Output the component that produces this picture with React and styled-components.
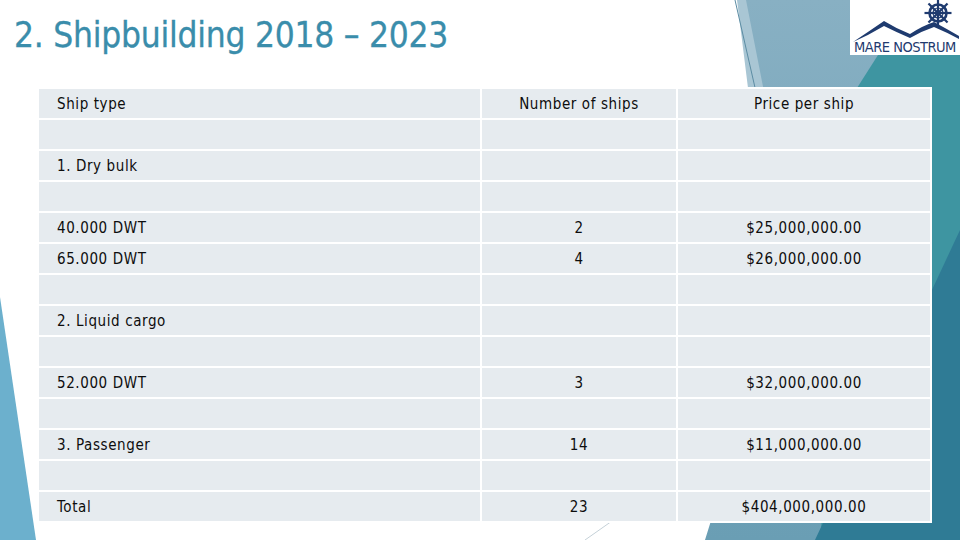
import React from 'react';
import styled, { createGlobalStyle } from 'styled-components';

const rows = [
  ['Ship type', 'Number of ships', 'Price per ship'],
  ['', '', ''],
  ['1. Dry bulk', '', ''],
  ['', '', ''],
  ['40.000 DWT', '2', '$25,000,000.00'],
  ['65.000 DWT', '4', '$26,000,000.00'],
  ['', '', ''],
  ['2. Liquid cargo', '', ''],
  ['', '', ''],
  ['52.000 DWT', '3', '$32,000,000.00'],
  ['', '', ''],
  ['3. Passenger', '14', '$11,000,000.00'],
  ['', '', ''],
  ['Total', '23', '$404,000,000.00'],
];

const Backdrop = () => (
  <BackdropSvg viewBox="0 0 960 540" width="960" height="540">
    <defs>
      <linearGradient id="greyBlue" x1="0" y1="0" x2="0" y2="1">
        <stop offset="0" stopColor="#88b0c3" />
        <stop offset="1" stopColor="#6a9eb4" />
      </linearGradient>
    </defs>
    <polygon points="0,297 36,540 0,540" fill="#6cb0cd" />
    <polygon points="737,0 752,0 790,200 762,200" fill="#a9c6d4" />
    <polygon points="746,0 960,0 960,540 705,540 795,250" fill="url(#greyBlue)" />
    <polygon points="913,0 960,0 960,540 820,540 857,88" fill="#3e95a1" />
    <polygon points="960,230 960,540 815,540" fill="#2f7b95" />
    <line x1="735" y1="0" x2="756" y2="92" stroke="#5c8ca3" strokeWidth="1" />
    <line x1="585" y1="540" x2="612" y2="521" stroke="#c5d1d8" strokeWidth="1" />
  </BackdropSvg>
);

const Wheel = () => (
  <svg width="30" height="30" viewBox="-15 -15 30 30">
    {[0, 45, 90, 135].map((a) => (
      <line
        key={a}
        x1="-13.5"
        y1="0"
        x2="13.5"
        y2="0"
        stroke="#1f3b6f"
        strokeWidth="2.2"
        transform={`rotate(${a})`}
      />
    ))}
    <circle r="8.5" fill="none" stroke="#1f3b6f" strokeWidth="2.6" />
    <circle r="5" fill="none" stroke="#1f3b6f" strokeWidth="1.2" />
    <circle r="2.4" fill="#1f3b6f" />
  </svg>
);

const Logo = () => (
  <LogoBox>
    <WheelSpot>
      <Wheel />
    </WheelSpot>
    <svg width="110" height="42" viewBox="850 0 110 42">
      <path
        d="M853,42 Q868,32 884,21 Q897,29 910,34 Q922,26 934,22 Q947,29 959,36 L959,39 Q946,32 934,27 Q922,31 910,38 Q896,32 884,26 Q869,35 853,42 Z"
        fill="#1f3b6f"
      />
    </svg>
    <LogoText>MARE NOSTRUM</LogoText>
  </LogoBox>
);

export default function App() {
  return (
    <>
      <GlobalStyle />
      <Slide>
        <Backdrop />
        <Header>
          <Title>2. Shipbuilding 2018 – 2023</Title>
          <Logo />
        </Header>
        <Table>
          {rows.map((row, i) =>
            row.map((text, j) => (
              <Cell key={`${i}-${j}`} $align={j === 0 ? 'left' : 'center'}>
                {text}
              </Cell>
            ))
          )}
        </Table>
      </Slide>
    </>
  );
}

const GlobalStyle = createGlobalStyle`
  html, body {
    margin: 0;
    padding: 0;
    background: #ffffff;
  }
`;

const Slide = styled.div`
  position: relative;
  width: 960px;
  height: 540px;
  overflow: hidden;
  background: #ffffff;
  font-family: "DejaVu Sans Condensed", "DejaVu Sans", sans-serif;
`;

const BackdropSvg = styled.svg`
  position: absolute;
  top: 0;
  left: 0;
  z-index: 0;
`;

const Header = styled.div`
  position: relative;
  z-index: 1;
  display: flex;
  justify-content: space-between;
  align-items: flex-start;
  height: 87px;
`;

const Title = styled.h1`
  margin: 0;
  padding: 15px 0 0 14px;
  font-family: "DejaVu Sans Condensed", "DejaVu Sans", sans-serif;
  font-weight: normal;
  font-size: 35px;
  line-height: 40px;
  color: #3a8dab;
  letter-spacing: -0.25px;
  -webkit-text-stroke: 0.3px #3a8dab;
`;

const LogoBox = styled.div`
  position: relative;
  width: 110px;
  height: 55px;
  background: #ffffff;
  display: flex;
  flex-direction: column;
  align-items: center;
`;

const WheelSpot = styled.div`
  position: absolute;
  top: -2px;
  right: 7px;
`;

const LogoText = styled.div`
  margin-top: -1px;
  font-family: "DejaVu Sans Condensed", "DejaVu Sans", sans-serif;
  font-size: 14.5px;
  line-height: 13px;
  color: #1f3b6f;
  letter-spacing: -0.5px;
  white-space: nowrap;
`;

const Table = styled.div`
  position: relative;
  z-index: 1;
  margin-left: 37px;
  width: 891px;
  display: grid;
  grid-template-columns: 441px 194px 252px;
  grid-auto-rows: 29px;
  gap: 2px;
  padding: 2px;
  background: #ffffff;
`;

const Cell = styled.div`
  display: flex;
  align-items: center;
  justify-content: ${(p) => (p.$align === 'left' ? 'flex-start' : 'center')};
  padding-left: ${(p) => (p.$align === 'left' ? '18px' : '0')};
  background: #e6ebef;
  font-size: 15px;
  letter-spacing: 0.6px;
  color: #0d0d0d;
  white-space: nowrap;
`;
